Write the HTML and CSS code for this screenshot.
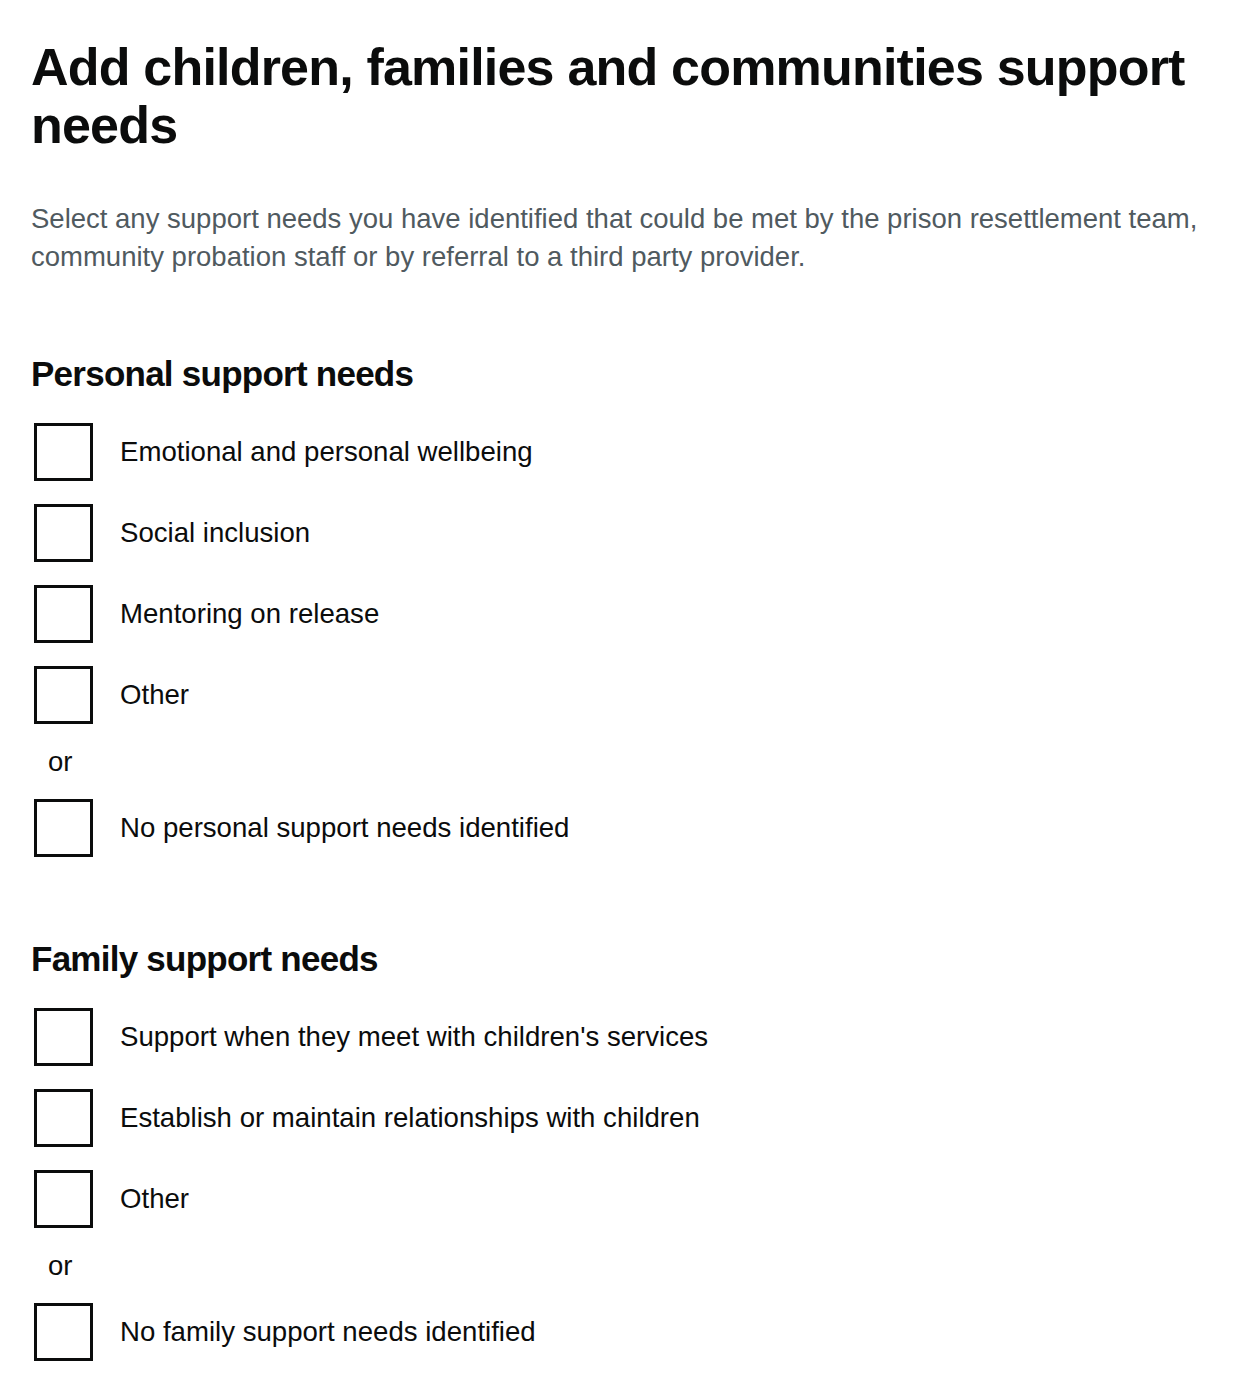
FILE: index.html
```html
<!DOCTYPE html>
<html lang="en">
<head>
<meta charset="utf-8">
<title>Add children, families and communities support needs</title>
<link rel="stylesheet" href="styles.css">
</head>
<body>
<main class="page">
  <h1 class="title">Add children, families and communities support needs</h1>
  <p class="lead">Select any support needs you have identified that could be met by the prison resettlement team, community probation staff or by referral to a third party provider.</p>

  <fieldset class="group">
    <legend class="group-title">Personal support needs</legend>
    <div class="options">
      <label class="option"><input class="box" type="checkbox"><span class="option-text">Emotional and personal wellbeing</span></label>
      <label class="option"><input class="box" type="checkbox"><span class="option-text">Social inclusion</span></label>
      <label class="option"><input class="box" type="checkbox"><span class="option-text">Mentoring on release</span></label>
      <label class="option"><input class="box" type="checkbox"><span class="option-text">Other</span></label>
      <div class="divider">or</div>
      <label class="option"><input class="box" type="checkbox"><span class="option-text">No personal support needs identified</span></label>
    </div>
  </fieldset>

  <fieldset class="group group-second">
    <legend class="group-title">Family support needs</legend>
    <div class="options">
      <label class="option"><input class="box" type="checkbox"><span class="option-text">Support when they meet with children's services</span></label>
      <label class="option"><input class="box" type="checkbox"><span class="option-text">Establish or maintain relationships with children</span></label>
      <label class="option"><input class="box" type="checkbox"><span class="option-text">Other</span></label>
      <div class="divider">or</div>
      <label class="option"><input class="box" type="checkbox"><span class="option-text">No family support needs identified</span></label>
    </div>
  </fieldset>
</main>
</body>
</html>
```

FILE: styles.css
```css
html, body {
  margin: 0;
  padding: 0;
  background: #ffffff;
}

body {
  font-family: "Liberation Sans", Arial, sans-serif;
  color: #0b0c0c;
}

.page {
  padding: 38px 0 0 31px;
}

.title {
  margin: 0;
  font-size: 52px;
  line-height: 58px;
  font-weight: 700;
  letter-spacing: -0.8px;
  max-width: 1200px;
}

.lead {
  margin: 46px 0 0;
  font-size: 27.5px;
  line-height: 38px;
  color: #505a5f;
}

.group {
  border: 0;
  margin: 76px 0 0;
  padding: 0;
  min-width: 0;
}

.group-second {
  margin-top: 80px;
}

.group-title {
  padding: 0;
  margin: 0 0 27px;
  font-size: 35px;
  line-height: 44px;
  font-weight: 700;
  letter-spacing: -0.75px;
  float: left;
  width: 100%;
}

.options {
  clear: both;
  display: flex;
  flex-direction: column;
  gap: 23px;
}

.option {
  display: flex;
  align-items: center;
  gap: 27px;
  cursor: pointer;
}

.box {
  appearance: none;
  -webkit-appearance: none;
  box-sizing: border-box;
  width: 59px;
  height: 58px;
  margin: 0 0 0 3px;
  border: 3px solid #0b0c0c;
  background: #ffffff;
  border-radius: 0;
  flex: none;
}

.option-text {
  font-size: 27.6px;
  line-height: 38px;
  color: #0b0c0c;
}

.divider {
  font-size: 27.5px;
  line-height: 29px;
  padding-left: 17px;
  color: #0b0c0c;
}
```
